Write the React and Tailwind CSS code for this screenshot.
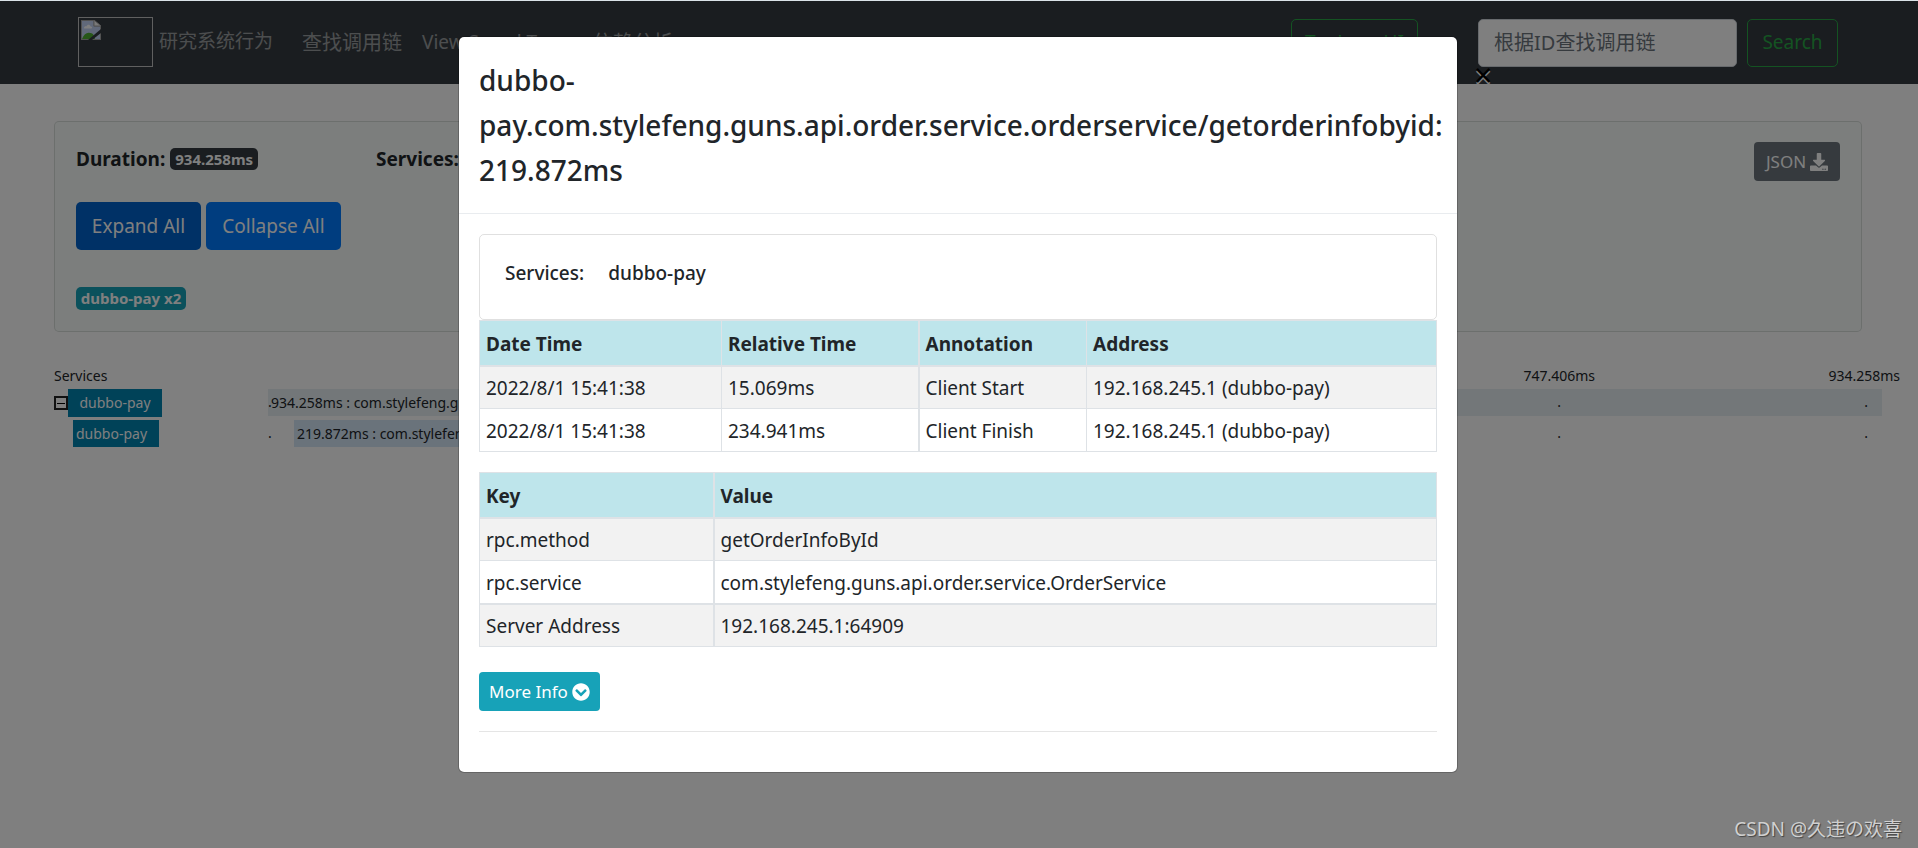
import React, { useState } from 'react';
import { FaDownload, FaChevronCircleDown } from 'react-icons/fa';

const annotations = [
  { time: '2022/8/1 15:41:38', relative: '15.069ms', name: 'Client Start', address: '192.168.245.1 (dubbo-pay)' },
  { time: '2022/8/1 15:41:38', relative: '234.941ms', name: 'Client Finish', address: '192.168.245.1 (dubbo-pay)' },
];

const tags = [
  { key: 'rpc.method', value: 'getOrderInfoById' },
  { key: 'rpc.service', value: 'com.stylefeng.guns.api.order.service.OrderService' },
  { key: 'Server Address', value: '192.168.245.1:64909' },
];

const BrokenImage = () => (
  <span role="img" aria-label="logo" className="block w-[75px] h-[50px] p-[2px] border border-[#c0c0c0]">
    <svg width="20" height="20" viewBox="0 0 20 20">
      <path d="M0 0h13l7 6v14H0z" fill="#a3a3a3" />
      <path d="M1 1h11.500v5.500H19V19H1z" fill="#c3d3f5" />
      <path d="M3 8c0-2 2-2 2.500-1.500C6 4 9 4 9.500 6.500c2 0 2 2 .5 2H4C3.500 8.500 3 8.500 3 8z" fill="#fff" />
      <path d="M1 19c2-5 5-7 8-6 3 0 4 2 5 6z" fill="#4fae33" />
      <path d="M13 0l7 6h-7z" fill="#f3f3f3" stroke="#a3a3a3" />
      <path d="M20 9L7 20h4l9-7z" fill="#343a40" />
    </svg>
  </span>
);

const Navbar = () => (
  <nav className="flex items-center h-[83px] pl-[78px] pr-20 bg-[#343a40] text-white/50">
    <a href="#home" className="flex items-center gap-[6px] pb-[2px] text-[19px]">
      <BrokenImage />
      研究系统行为
    </a>
    <div className="flex items-center gap-5 ml-[29px] text-[20px]">
      <a href="#find">查找调用链</a>
      <a href="#saved" className="w-[151px] whitespace-nowrap text-[19px]">View Saved Trace</a>
      <a href="#deps">依赖分析</a>
    </div>
    <div className="flex items-center gap-[10px] ml-auto">
      <button className="w-[127px] h-[48px] mr-[50px] border border-[#28a745] rounded-[5px] text-[19px] text-[#28a745]">
        Try Lens UI
      </button>
      <input
        aria-label="根据ID查找调用链"
        placeholder="根据ID查找调用链"
        className="w-[259px] h-[48px] px-[15px] border border-[#ced4da] rounded-[5px] bg-white text-[20px] placeholder:text-[#6c757d]"
      />
      <button className="w-[91px] h-[48px] border border-[#28a745] rounded-[5px] text-[19px] text-[#28a745]">
        Search
      </button>
    </div>
  </nav>
);

const Summary = () => (
  <section className="relative h-[211px] ml-[54px] mr-[56px] mt-[37px] px-[21px] pt-[22px] border border-black/12 rounded-[5px] bg-[#f8fdfa]">
    <div className="flex items-center h-[30px] text-[19px] font-bold">
      <div className="flex items-center gap-[5px] w-[300px]">
        Duration:
        <span className="h-[22px] px-[5px] rounded-[5px] bg-[#343a40] text-[15px] leading-[22px] text-white">934.258ms</span>
      </div>
      <div>Services:</div>
    </div>
    <button className="absolute top-5 right-[21px] flex items-center justify-center gap-1 w-[86px] h-[39px] rounded-[4px] bg-[#6c757d] text-[17px] text-white">
      JSON
      <FaDownload className="w-[18px] h-[18px]" />
    </button>
    <div className="flex gap-[5px] mt-[28px] text-[19px] text-white">
      <button className="w-[125px] h-[48px] rounded-[5px] bg-[#0062cc]">Expand All</button>
      <button className="w-[135px] h-[48px] rounded-[5px] bg-[#007bff]">Collapse All</button>
    </div>
    <span className="block w-[110px] h-[23px] mt-[37px] rounded-[5px] bg-[#17a2b8] text-center text-[15px] leading-[22px] font-bold text-white">
      dubbo-pay x2
    </span>
  </section>
);

const MarkDots = () => (
  <div className="absolute inset-0 leading-[26px]">
    <span className="absolute left-0">.</span>
    <span className="absolute left-[80%] -ml-[2px]">.</span>
    <span className="absolute right-[14px]">.</span>
  </div>
);

const Timeline = () => {
  const [expanded, setExpanded] = useState(true);

  return (
    <section className="ml-[54px] mr-9 mt-8 text-[14px] text-[#212529]">
      <div className="flex h-[25px] leading-6">
        <span className="w-[214px] shrink-0">Services</span>
        <div className="flex flex-1 justify-end">
          <span className="w-[20%] text-center">747.406ms</span>
          <span className="w-[10%]">
            <span className="block -mr-[18px] text-right">934.258ms</span>
          </span>
        </div>
      </div>

      <div className="flex h-[28px]">
        <div className="flex items-center w-[214px] shrink-0">
          <button
            aria-label="Toggle children"
            onClick={() => setExpanded(!expanded)}
            className="flex items-center justify-center w-[14px] h-[14px] border-2 border-[#222]"
          >
            <span className="w-2 h-px bg-black" />
          </button>
          <span className="w-[94px] h-[28px] bg-[#0084b0] text-center leading-[27px] text-white">dubbo-pay</span>
        </div>
        <div className="relative flex-1 h-[27px] bg-[#e6eef2] overflow-hidden">
          <span className="pl-[3px] leading-[27px]">934.258ms : com.stylefeng.guns</span>
          <MarkDots />
        </div>
      </div>

      {expanded && (
        <div className="flex h-[27px] mt-[3px]">
          <div className="w-[214px] shrink-0 pl-[19px]">
            <span className="block w-[86px] h-[27px] pl-[3px] bg-[#0084b0] leading-[27px] text-white">dubbo-pay</span>
          </div>
          <div className="relative flex-1">
            <div className="w-[24%] h-[27px] ml-[26px] pl-[3px] bg-[#d4e6f6] leading-[27px] whitespace-nowrap overflow-hidden">
              219.872ms : com.stylefeng
            </div>
            <MarkDots />
          </div>
        </div>
      )}
    </section>
  );
};

const Th = ({ children, className = '' }) => (
  <th className={`h-[45px] px-[6px] pt-[2px] border border-b-2 border-[#dee2e6] text-left font-bold ${className}`}>{children}</th>
);

const Td = ({ children, className = '' }) => (
  <td className={`h-[43px] px-[6px] pt-[2px] border border-[#dee2e6] ${className}`}>{children}</td>
);

const SpanModal = () => (
  <div role="dialog" aria-modal="true" className="w-[1000px] max-w-full mx-auto mt-[35px] border border-black/20 rounded-[6px] bg-white bg-clip-padding text-[19px] text-[#212529]">
    <header className="px-5 pt-[21px] pb-5 border-b border-[#e9ecef]">
      <h5 className="text-[28px] leading-[45px] font-medium">
        dubbo-pay.com.stylefeng.guns.api.order.service.orderservice/getorderinfobyid: 219.872ms
      </h5>
    </header>

    <div className="px-5 pt-5 pb-10">
      <div className="flex gap-6 h-[86px] pl-[25px] pt-[23px] border border-black/12 rounded-[5px] leading-[30px] font-medium">
        <span>Services:</span>
        <span>dubbo-pay</span>
      </div>

      <table className="w-full table-fixed border-collapse">
        <thead>
          <tr className="bg-[#bee5eb]">
            <Th className="w-[242px]">Date Time</Th>
            <Th className="w-[197px]">Relative Time</Th>
            <Th className="w-[168px] border-l-2">Annotation</Th>
            <Th>Address</Th>
          </tr>
        </thead>
        <tbody>
          {annotations.map((item) => (
            <tr key={item.name} className="odd:bg-[#f2f2f2]">
              <Td>{item.time}</Td>
              <Td>{item.relative}</Td>
              <Td className="border-l-2">{item.name}</Td>
              <Td>{item.address}</Td>
            </tr>
          ))}
        </tbody>
      </table>

      <table className="w-full mt-5 table-fixed border-collapse">
        <thead>
          <tr className="bg-[#bee5eb]">
            <Th className="w-[234px]">Key</Th>
            <Th className="border-l-2">Value</Th>
          </tr>
        </thead>
        <tbody>
          {tags.map((tag) => (
            <tr key={tag.key} className="odd:bg-[#f2f2f2] last:border-t-2 border-[#dee2e6]">
              <Td>{tag.key}</Td>
              <Td className="border-l-2">{tag.value}</Td>
            </tr>
          ))}
        </tbody>
      </table>

      <button className="flex items-center justify-center gap-1 w-[121px] h-[39px] mt-[25px] rounded-[4px] bg-[#17a2b8] text-[17px] text-white">
        More Info
        <FaChevronCircleDown className="w-[18px] h-[18px]" />
      </button>
      <hr className="mt-5 border-black/10" />
    </div>
  </div>
);

const App = () => {
  return (
    <div className="relative min-h-screen border-t border-[#dbe3e8] bg-white font-['Noto_Sans','Noto_Sans_CJK_SC',sans-serif] text-[#212529]">
      <Navbar />
      <button
        aria-label="Close"
        className="absolute top-[62px] left-[1474px] text-[32px] leading-6 text-black [text-shadow:0_2px_0_#fff]"
      >
        ×
      </button>
      <Summary />
      <Timeline />

      <div className="absolute inset-0 bg-black/50" />
      <div className="absolute inset-0 pr-[2px]">
        <SpanModal />
      </div>

      <div className="absolute right-4 bottom-[7px] text-[19px] leading-6 text-[#d0d0d0] [text-shadow:1px_1px_1px_#444]">
        CSDN @久违の欢喜
      </div>
    </div>
  );
};

export default App;
